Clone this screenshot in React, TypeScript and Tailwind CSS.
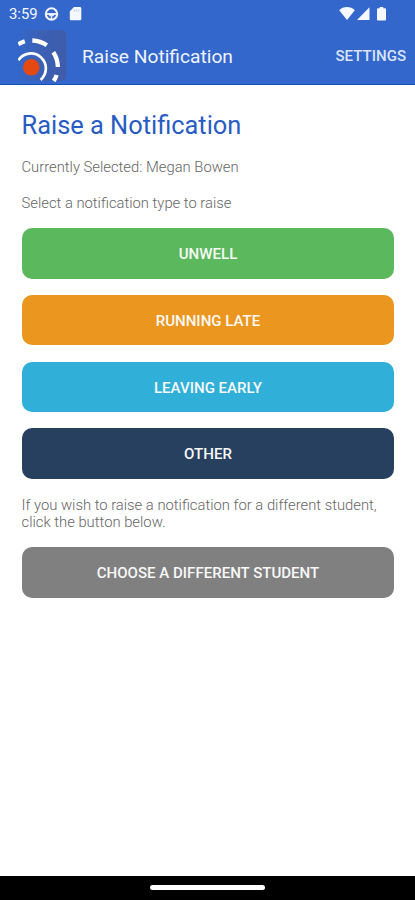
type NotificationType = {
  label: string;
  color: string;
};

const notificationTypes: NotificationType[] = [
  { label: "UNWELL", color: "bg-[#5cb85c]" },
  { label: "RUNNING LATE", color: "bg-[#eb971f]" },
  { label: "LEAVING EARLY", color: "bg-[#30b0d8]" },
  { label: "OTHER", color: "bg-[#274060]" },
];

const buttonClass =
  "flex h-[50.6px] w-full items-center justify-center rounded-[10px] pt-[3px] pl-px text-[15.05px] font-medium text-[#f8f8f8]";

function StatusBar() {
  return (
    <div className="flex h-7 items-center justify-between pl-[9px] pr-[29px] text-[#f5f8ff]">
      <div className="flex items-center">
        <span className="w-[35px] text-[14.8px] leading-7">3:59</span>
        <svg width="15" height="15" viewBox="0 0 15 15" fill="none" stroke="currentColor">
          <circle cx="7.5" cy="7" r="5.7" strokeWidth="2" />
          <path d="M2.500 7h10" strokeWidth="1.800" />
          <path d="M5.500 7h4v1.800h-4z" fill="currentColor" strokeWidth="0.6" />
          <path d="M7.500 9v4" strokeWidth="1.300" />
        </svg>
        <svg className="ml-[10px]" width="13" height="15" viewBox="0 0 13 15">
          <path
            d="M5 .1h6a1.300 1.300 0 0 1 1.300 1.300v10.600A1.300 1.300 0 0 1 11 13.300H2.100A1.300 1.300 0 0 1 .8 12V4.300z"
            fill="currentColor"
          />
          <path d="M5.300 2.300v2.300M7.500 2.300v2.300M9.700 2.300v2.300" stroke="#3367cc" strokeWidth="0.700" opacity="0.4" />
        </svg>
      </div>
      <div className="flex items-center">
        <svg width="16" height="14" viewBox="0 0 16 14" fill="currentColor">
          <path d="M8 13 .2 3.200C2.300 1.300 5 .1 8 .1s5.700 1.200 7.800 3.100z" />
        </svg>
        <svg className="ml-[2px]" width="13" height="14" viewBox="0 0 13 14" fill="currentColor">
          <path d="M12.500.3V13H0z" />
        </svg>
        <svg className="ml-[7px]" width="9" height="15" viewBox="0 0 9 15" fill="currentColor">
          <path d="M2.700 0h3.600v1.300H8a1 1 0 0 1 1 1v10.300a1 1 0 0 1-1 1H1a1 1 0 0 1-1-1V2.300a1 1 0 0 1 1-1h1.700z" />
        </svg>
      </div>
    </div>
  );
}

function Logo() {
  return (
    <svg width="50" height="52" viewBox="0 0 50 52" fill="none">
      <defs>
        <linearGradient id="tile" x1="0" x2="1" y1="0" y2="0">
          <stop offset="0" stopColor="#3367cc" />
          <stop offset="0.45" stopColor="#3b60b4" />
          <stop offset="1" stopColor="#3f5caa" />
        </linearGradient>
      </defs>
      <path d="M0 0h43a5 5 0 0 1 5 5v41a5 5 0 0 1-5 5H0z" fill="url(#tile)" />
      {/* rings share the centre of the orange dot */}
      <g stroke="#fff">
        <path d="M.3 30.300A15 15 0 1 1 22.600 49.900" strokeWidth="2.700" />
        <path d="M.3 14.300Q3.300 12.300 6.800 11.200" strokeWidth="4.300" />
        <path d="M14.300 10.500Q22.300 10.700 28.800 15.200" strokeWidth="4.300" />
        <path d="M35.300 22.300Q39.600 28.500 39.900 37" strokeWidth="4.300" />
        <path d="M38.600 45Q37.600 48.300 35.700 51" strokeWidth="4.300" />
      </g>
      <circle cx="13.300" cy="37.300" r="8.300" fill="#e44912" />
    </svg>
  );
}

export default function App() {
  return (
    <div className="flex h-[900px] w-[415px] flex-col bg-white font-[Roboto,'Liberation_Sans',sans-serif]">
      <header className="h-[84.5px] border-b border-[#1550b8] bg-[#3367cc]">
        <StatusBar />
        <div className="flex h-14 items-center pl-[18px] pr-[9px] text-[#eef3ff]">
          <Logo />
          <h1 className="ml-[14px] pt-0.5 text-[19.2px]">Raise Notification</h1>
          <button className="ml-auto pt-px text-[15.05px] font-medium text-[#d9e3fa]">SETTINGS</button>
        </div>
      </header>

      <main className="flex-1 px-[21.5px] pt-6 text-[14.8px] leading-[17.5px] font-light text-[#666666]">
        <h2 className="text-[25.4px] leading-8 font-normal text-[#285bc4]">Raise a Notification</h2>
        <p className="mt-[18px]">Currently Selected: Megan Bowen</p>
        <p className="mt-[18.5px]">Select a notification type to raise</p>
        <div className="mt-4 flex flex-col gap-[16.2px]">
          {notificationTypes.map((type) => (
            <button key={type.label} className={`${buttonClass} ${type.color}`}>
              {type.label}
            </button>
          ))}
        </div>
        <p className="mt-[18px]">
          If you wish to raise a notification for a different student,
          <br />
          click the button below.
        </p>
        <button className={`${buttonClass} mt-[15.5px] bg-[#808080]`}>CHOOSE A DIFFERENT STUDENT</button>
      </main>

      <nav className="flex h-[24.5px] justify-center bg-black pt-[9.5px]">
        <div className="h-[5px] w-[115px] rounded-full bg-white" />
      </nav>
    </div>
  );
}
